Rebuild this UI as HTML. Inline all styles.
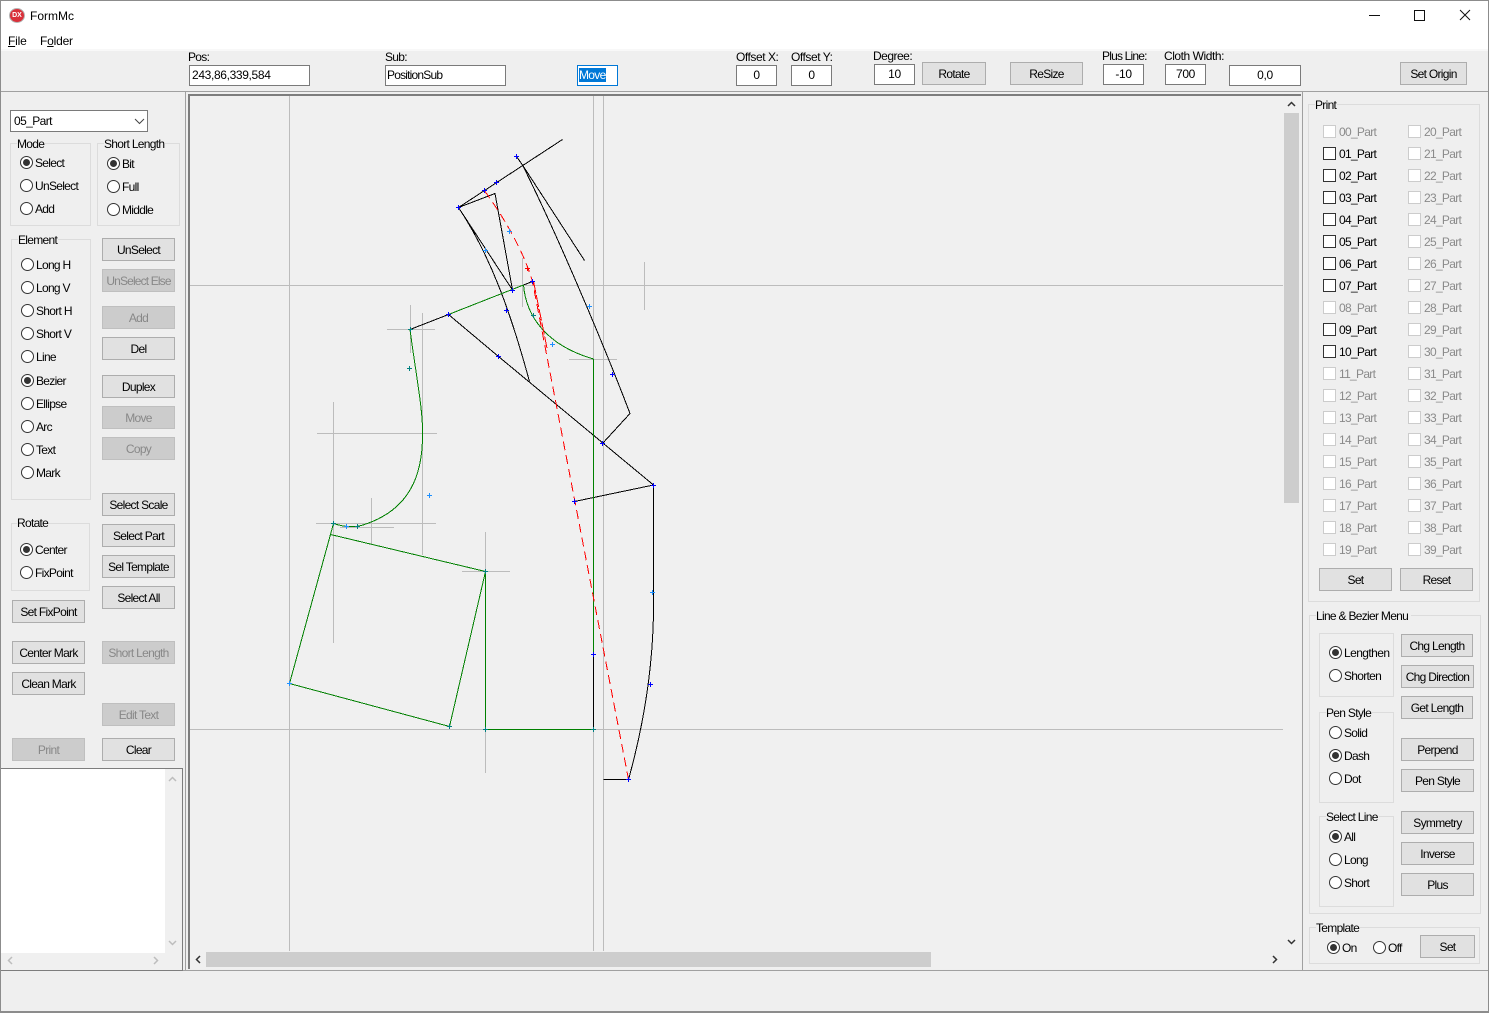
<!DOCTYPE html>
<html><head><meta charset="utf-8"><title>FormMc</title>
<style>
html,body{margin:0;padding:0;width:1489px;height:1013px;overflow:hidden;background:#efefef}
body{position:relative;font:12px/16px "Liberation Sans",sans-serif;letter-spacing:-.7px;color:#000}
div,span.a{position:absolute;box-sizing:border-box}
.t{white-space:nowrap;height:16px}
.d{color:#8a8a8a}
.b{height:23px;width:73px;background:#e1e1e1;border:1px solid #adadad;text-align:center;line-height:23px;white-space:nowrap}
.x{background:#ccc;border-color:#bfbfbf;color:#888}
.i{height:21px;background:#fff;border:1px solid #7a7a7a;line-height:19px;white-space:nowrap;text-align:center;letter-spacing:-.35px}
.g{border:1px solid #dcdcdc}
.r{width:13px;height:13px;border:1px solid #333;border-radius:50%;background:#fff}
.on:after{content:"";position:absolute;left:2px;top:2px;width:7px;height:7px;border-radius:50%;background:#333}
.c{width:13px;height:13px;border:1px solid #333;background:#fff}
.c.o{border-color:#ccc}
.l{background:#8c8c8c}
svg{position:absolute;left:0;top:0;overflow:visible}
</style></head><body>
<div style="left:0;top:0;width:1489px;height:50px;background:#fff"></div>
<div style="left:0;top:49px;width:1489px;height:2px;background:#f8f8f8"></div>
<div class="l" style="left:0;top:0;width:1489px;height:1px"></div>
<div class="l" style="left:0;top:0;width:1px;height:1013px"></div>
<div class="l" style="left:1488px;top:0;width:1px;height:1013px"></div>
<div class="l" style="left:0;top:1011px;width:1489px;height:2px"></div>
<div style="left:9px;top:8px;width:16px;height:15px;border-radius:50%;background:#d9303a;border:1px solid #b5b5b5;color:#fff;font:bold 7px/13px 'Liberation Sans',sans-serif;text-align:center;letter-spacing:0">DX</div>
<div class="t" style="left:30px;top:8px;letter-spacing:0">FormMc</div>
<div class="t" style="left:8px;top:33px;letter-spacing:-.2px"><u>F</u>ile</div>
<div class="t" style="left:40px;top:33px;letter-spacing:-.2px">F<u>o</u>lder</div>
<svg width="1489" height="30" style="left:0;top:0"><path d="M1369 15.500h11M1414.500 10.500h10v10h-10zM1460 10l10 10M1470 10l-10 10" stroke="#111" fill="none"/></svg>

<div class="t" style="left:188px;top:49px">Pos:</div>
<div class="i" style="left:189px;top:65px;width:121px;text-align:left;padding-left:2px">243,86,339,584</div>
<div class="t" style="left:385px;top:49px">Sub:</div>
<div class="i" style="left:385px;top:65px;width:121px;text-align:left;padding-left:1px;letter-spacing:-.8px">PositionSub</div>
<div class="i" style="left:577px;top:65px;width:41px;text-align:left;padding-left:1px;border-color:#0078d7;letter-spacing:-.7px"><span style="background:#0078d7;color:#fff">Move</span></div>
<div class="t" style="left:736px;top:49px;letter-spacing:-.45px">Offset X:</div>
<div class="i" style="left:736px;top:65px;width:41px">0</div>
<div class="t" style="left:791px;top:49px;letter-spacing:-.45px">Offset Y:</div>
<div class="i" style="left:791px;top:65px;width:41px">0</div>
<div class="t" style="left:873px;top:48px;letter-spacing:-.5px">Degree:</div>
<div class="i" style="left:874px;top:64px;width:41px">10</div>
<div class="b" style="left:922px;top:62px;width:64px">Rotate</div>
<div class="b" style="left:1010px;top:62px">ReSize</div>
<div class="t" style="left:1102px;top:48px;letter-spacing:-.8px">Plus Line:</div>
<div class="i" style="left:1103px;top:64px;width:41px">-10</div>
<div class="t" style="left:1164px;top:48px;letter-spacing:-.45px">Cloth Width:</div>
<div class="i" style="left:1165px;top:64px;width:41px">700</div>
<div class="i" style="left:1229px;top:65px;width:72px">0,0</div>
<div class="b" style="left:1400px;top:62px;width:67px">Set Origin</div>

<div class="l" style="left:1px;top:91px;width:1487px;height:1px;background:#a0a0a0"></div>
<div class="l" style="left:185px;top:91px;width:1px;height:880px;background:#a0a0a0"></div>
<div class="l" style="left:1302px;top:91px;width:1px;height:880px;background:#a0a0a0"></div>
<div class="l" style="left:1px;top:970px;width:1487px;height:1px;background:#a0a0a0"></div>

<!-- canvas -->
<div style="left:188px;top:94px;width:1113px;height:875px;background:#f0f0f0;border-left:2px solid #7d7d7d;border-top:2px solid #7d7d7d"></div>
<svg width="1489" height="1013">
<g shape-rendering="crispEdges" stroke="#bcbcbc" fill="none">
<path d="M289.500 96V951M593.500 96V951M603.500 96V951M190 285.500H1283M190 729.500H1283"/>
<path d="M387 329.500H435M410.500 305V353M422.500 313V555M522.500 258V307M644.500 262V310M569 359.500H617M317 433.500H437M333.500 402V643M316 523.500H436M340 527.500H394M371.500 498V545M462 571.500H510M485.500 532V773"/>
</g>
<g fill="none" stroke="#000" shape-rendering="crispEdges">
<path d="M458.500 207.500L562.500 139.500M516.500 156.500L522.500 165L584.500 260.500"/>
<path d="M522.500 165C555 230 600 335 630 413.500L602.500 443.500"/>
<path d="M458.500 207.500L495 193.500L512.500 290L458.500 207.500"/>
<path d="M458.500 207.500C490 255 510 310 529.500 381.500"/>
<path d="M523.500 285L532.500 281.500M410 329.500L448.500 314.500"/>
<path d="M448.500 314.500L498.500 356.500L653.500 485M574.500 501.500L653.500 485"/>
<path d="M653.500 485V600C654 660 645 720 628.500 779.500H603.500M593.500 653V729.500"/>
</g>
<g fill="none" stroke="#008000" shape-rendering="crispEdges">
<path d="M448.500 314.500L523.500 285"/>
<path d="M593.500 359V653M485.500 571.500V729.500H593.500"/>
<path d="M523.500 285C526 315 545 345 593.500 359"/>
<path d="M410 329.500C416 375 423 410 422.500 433C423 475 410 510 363 525Q350 529 333.500 523.500"/>
<path d="M333.500 523.500L289.500 683.500L449.500 726.500L485.500 571.500L330.500 534.500"/>
</g>
<path d="M484.500 190.700Q520 240 532.500 281.500L628.500 779.500" fill="none" stroke="#f00" stroke-dasharray="9 5" shape-rendering="crispEdges"/>
<path d="M533.500 281.500L547 348" fill="none" stroke="#f00" stroke-dasharray="12 2" shape-rendering="crispEdges"/>
<path shape-rendering="crispEdges" fill="none" stroke="#00f" d="M514 156.500h5M516.500 154v5M494 182.500h5M496.500 180v5M482 190.500h5M484.500 188v5M456 207.500h5M458.500 205v5M510 290.500h5M512.500 288v5M530 281.500h5M532.500 279v5M504 310.500h5M506.500 308v5M446 314.500h5M448.500 312v5M496 356.500h5M498.500 354v5M610 374.500h5M612.500 372v5M600 443.500h5M602.500 441v5M651 485.500h5M653.500 483v5M572 501.500h5M574.500 499v5M591 654.500h5M593.500 652v5M648 684.500h5M650.500 682v5M626 779.500h5M628.500 777v5"/>
<path shape-rendering="crispEdges" fill="none" stroke="#1e90ff" d="M507 231.500h5M509.500 229v5M483 250.500h5M485.500 248v5M587 306.500h5M589.500 304v5M550 344.500h5M552.500 342v5M427 495.500h5M429.500 493v5M344 526.500h5M346.500 524v5M287 683.500h5M289.500 681v5M650 592.500h5M652.500 590v5"/>
<path shape-rendering="crispEdges" fill="none" stroke="#008080" d="M408 329.500h5M410.500 327v5M407 368.500h5M409.500 366v5M531 315.500h5M533.500 313v5M331 523.500h5M333.500 521v5M355 526.500h5M357.500 524v5M447 726.500h5M449.500 724v5M483 571.500h5M485.500 569v5M483 729.500h5M485.500 727v5M591 729.500h5M593.500 727v5"/>
<path shape-rendering="crispEdges" fill="none" stroke="#f00" d="M525 268.500h5M527.500 266v5"/>
</svg>
<!-- canvas scrollbars -->
<div style="left:1284px;top:96px;width:16px;height:855px;background:#f0f0f0"></div>
<div style="left:1284px;top:113px;width:15px;height:390px;background:#cdcdcd"></div>
<div style="left:190px;top:951px;width:1110px;height:17px;background:#f0f0f0"></div>
<div style="left:206px;top:952px;width:725px;height:15px;background:#cdcdcd"></div>
<svg width="1489" height="1013"><path d="M1288 106l3.500-3.500l3.500 3.500M1288 940l3.500 3.500l3.500-3.500M200 956l-3.500 3.500l3.500 3.500M1273 956l3.500 3.500l-3.500 3.500" fill="none" stroke="#333" stroke-width="1.500"/></svg>

<!-- left panel -->
<div class="i" style="left:10px;top:110px;width:138px;height:22px;text-align:left;padding-left:3px;line-height:20px;letter-spacing:-.6px">05_Part</div>
<svg width="200" height="140"><path d="M135 119l4.500 4.500l4.500-4.500" fill="none" stroke="#444"/></svg>
<div class="g" style="left:10px;top:143px;width:81px;height:83px"></div>
<div class="t" style="left:17px;top:136px;background:#efefef;padding-right:1px">Mode</div>
<div class="r on" style="left:20px;top:156px"></div><div class="t" style="left:35px;top:155px">Select</div>
<div class="r" style="left:20px;top:179px"></div><div class="t" style="left:35px;top:178px">UnSelect</div>
<div class="r" style="left:20px;top:202px"></div><div class="t" style="left:35px;top:201px">Add</div>
<div class="g" style="left:97px;top:143px;width:83px;height:83px"></div>
<div class="t" style="left:104px;top:136px;background:#efefef;padding-right:1px">Short Length</div>
<div class="r on" style="left:107px;top:157px"></div><div class="t" style="left:122px;top:156px">Bit</div>
<div class="r" style="left:107px;top:180px"></div><div class="t" style="left:122px;top:179px">Full</div>
<div class="r" style="left:107px;top:203px"></div><div class="t" style="left:122px;top:202px">Middle</div>

<div class="g" style="left:11px;top:239px;width:80px;height:261px"></div>
<div class="t" style="left:18px;top:232px;background:#efefef;padding-right:1px">Element</div>
<div class="r" style="left:21px;top:258px"></div><div class="t" style="left:36px;top:257px">Long H</div>
<div class="r" style="left:21px;top:281px"></div><div class="t" style="left:36px;top:280px">Long V</div>
<div class="r" style="left:21px;top:304px"></div><div class="t" style="left:36px;top:303px">Short H</div>
<div class="r" style="left:21px;top:327px"></div><div class="t" style="left:36px;top:326px">Short V</div>
<div class="r" style="left:21px;top:350px"></div><div class="t" style="left:36px;top:349px">Line</div>
<div class="r on" style="left:21px;top:374px"></div><div class="t" style="left:36px;top:373px">Bezier</div>
<div class="r" style="left:21px;top:397px"></div><div class="t" style="left:36px;top:396px">Ellipse</div>
<div class="r" style="left:21px;top:420px"></div><div class="t" style="left:36px;top:419px">Arc</div>
<div class="r" style="left:21px;top:443px"></div><div class="t" style="left:36px;top:442px">Text</div>
<div class="r" style="left:21px;top:466px"></div><div class="t" style="left:36px;top:465px">Mark</div>

<div class="g" style="left:11px;top:523px;width:79px;height:68px"></div>
<div class="t" style="left:17px;top:515px;background:#efefef;padding-right:1px">Rotate</div>
<div class="r on" style="left:20px;top:543px"></div><div class="t" style="left:35px;top:542px">Center</div>
<div class="r" style="left:20px;top:566px"></div><div class="t" style="left:35px;top:565px">FixPoint</div>

<div class="b" style="left:102px;top:238px">UnSelect</div>
<div class="b x" style="left:102px;top:269px;letter-spacing:-.85px">UnSelect Else</div>
<div class="b x" style="left:102px;top:306px">Add</div>
<div class="b" style="left:102px;top:337px">Del</div>
<div class="b" style="left:102px;top:375px">Duplex</div>
<div class="b x" style="left:102px;top:406px">Move</div>
<div class="b x" style="left:102px;top:437px">Copy</div>
<div class="b" style="left:102px;top:493px">Select Scale</div>
<div class="b" style="left:102px;top:524px">Select Part</div>
<div class="b" style="left:102px;top:555px">Sel Template</div>
<div class="b" style="left:102px;top:586px">Select All</div>
<div class="b x" style="left:102px;top:641px">Short Length</div>
<div class="b x" style="left:102px;top:703px">Edit Text</div>
<div class="b" style="left:102px;top:738px">Clear</div>
<div class="b" style="left:12px;top:600px">Set FixPoint</div>
<div class="b" style="left:12px;top:641px">Center Mark</div>
<div class="b" style="left:12px;top:672px">Clean Mark</div>
<div class="b x" style="left:12px;top:738px">Print</div>

<!-- memo -->
<div style="left:1px;top:768px;width:182px;height:203px;background:#f0f0f0;border-top:1px solid #7d7d7d;border-right:1px solid #7d7d7d;border-bottom:1px solid #7d7d7d"></div>
<div style="left:1px;top:769px;width:164px;height:184px;background:#fff"></div>
<svg width="200" height="1013"><path d="M169 781l3.500-3.500l3.500 3.500M169 941l3.500 3.500l3.500-3.500M12 957l-3.500 3.500l3.500 3.500M154 957l3.500 3.500l-3.500 3.500" fill="none" stroke="#bdbdbd" stroke-width="1.500"/></svg>

<!-- print group -->
<div class="g" style="left:1308px;top:104px;width:172px;height:498px"></div>
<div class="t" style="left:1315px;top:97px;background:#efefef;padding-right:1px">Print</div>
<div class="c o" style="left:1323px;top:125px"></div><div class="t d" style="left:1339px;top:124px">00_Part</div>
<div class="c" style="left:1323px;top:147px"></div><div class="t" style="left:1339px;top:146px">01_Part</div>
<div class="c" style="left:1323px;top:169px"></div><div class="t" style="left:1339px;top:168px">02_Part</div>
<div class="c" style="left:1323px;top:191px"></div><div class="t" style="left:1339px;top:190px">03_Part</div>
<div class="c" style="left:1323px;top:213px"></div><div class="t" style="left:1339px;top:212px">04_Part</div>
<div class="c" style="left:1323px;top:235px"></div><div class="t" style="left:1339px;top:234px">05_Part</div>
<div class="c" style="left:1323px;top:257px"></div><div class="t" style="left:1339px;top:256px">06_Part</div>
<div class="c" style="left:1323px;top:279px"></div><div class="t" style="left:1339px;top:278px">07_Part</div>
<div class="c o" style="left:1323px;top:301px"></div><div class="t d" style="left:1339px;top:300px">08_Part</div>
<div class="c" style="left:1323px;top:323px"></div><div class="t" style="left:1339px;top:322px">09_Part</div>
<div class="c" style="left:1323px;top:345px"></div><div class="t" style="left:1339px;top:344px">10_Part</div>
<div class="c o" style="left:1323px;top:367px"></div><div class="t d" style="left:1339px;top:366px">11_Part</div>
<div class="c o" style="left:1323px;top:389px"></div><div class="t d" style="left:1339px;top:388px">12_Part</div>
<div class="c o" style="left:1323px;top:411px"></div><div class="t d" style="left:1339px;top:410px">13_Part</div>
<div class="c o" style="left:1323px;top:433px"></div><div class="t d" style="left:1339px;top:432px">14_Part</div>
<div class="c o" style="left:1323px;top:455px"></div><div class="t d" style="left:1339px;top:454px">15_Part</div>
<div class="c o" style="left:1323px;top:477px"></div><div class="t d" style="left:1339px;top:476px">16_Part</div>
<div class="c o" style="left:1323px;top:499px"></div><div class="t d" style="left:1339px;top:498px">17_Part</div>
<div class="c o" style="left:1323px;top:521px"></div><div class="t d" style="left:1339px;top:520px">18_Part</div>
<div class="c o" style="left:1323px;top:543px"></div><div class="t d" style="left:1339px;top:542px">19_Part</div>
<div class="c o" style="left:1408px;top:125px"></div><div class="t d" style="left:1424px;top:124px">20_Part</div>
<div class="c o" style="left:1408px;top:147px"></div><div class="t d" style="left:1424px;top:146px">21_Part</div>
<div class="c o" style="left:1408px;top:169px"></div><div class="t d" style="left:1424px;top:168px">22_Part</div>
<div class="c o" style="left:1408px;top:191px"></div><div class="t d" style="left:1424px;top:190px">23_Part</div>
<div class="c o" style="left:1408px;top:213px"></div><div class="t d" style="left:1424px;top:212px">24_Part</div>
<div class="c o" style="left:1408px;top:235px"></div><div class="t d" style="left:1424px;top:234px">25_Part</div>
<div class="c o" style="left:1408px;top:257px"></div><div class="t d" style="left:1424px;top:256px">26_Part</div>
<div class="c o" style="left:1408px;top:279px"></div><div class="t d" style="left:1424px;top:278px">27_Part</div>
<div class="c o" style="left:1408px;top:301px"></div><div class="t d" style="left:1424px;top:300px">28_Part</div>
<div class="c o" style="left:1408px;top:323px"></div><div class="t d" style="left:1424px;top:322px">29_Part</div>
<div class="c o" style="left:1408px;top:345px"></div><div class="t d" style="left:1424px;top:344px">30_Part</div>
<div class="c o" style="left:1408px;top:367px"></div><div class="t d" style="left:1424px;top:366px">31_Part</div>
<div class="c o" style="left:1408px;top:389px"></div><div class="t d" style="left:1424px;top:388px">32_Part</div>
<div class="c o" style="left:1408px;top:411px"></div><div class="t d" style="left:1424px;top:410px">33_Part</div>
<div class="c o" style="left:1408px;top:433px"></div><div class="t d" style="left:1424px;top:432px">34_Part</div>
<div class="c o" style="left:1408px;top:455px"></div><div class="t d" style="left:1424px;top:454px">35_Part</div>
<div class="c o" style="left:1408px;top:477px"></div><div class="t d" style="left:1424px;top:476px">36_Part</div>
<div class="c o" style="left:1408px;top:499px"></div><div class="t d" style="left:1424px;top:498px">37_Part</div>
<div class="c o" style="left:1408px;top:521px"></div><div class="t d" style="left:1424px;top:520px">38_Part</div>
<div class="c o" style="left:1408px;top:543px"></div><div class="t d" style="left:1424px;top:542px">39_Part</div>
<div class="b" style="left:1319px;top:568px">Set</div>
<div class="b" style="left:1400px;top:568px">Reset</div>

<!-- line & bezier -->
<div class="g" style="left:1309px;top:615px;width:172px;height:299px"></div>
<div class="t" style="left:1316px;top:608px;background:#efefef;padding-right:3px">Line &amp; Bezier Menu</div>
<div class="g" style="left:1319px;top:633px;width:75px;height:64px"></div>
<div class="r on" style="left:1329px;top:646px"></div><div class="t" style="left:1344px;top:645px;letter-spacing:-.57px">Lengthen</div>
<div class="r" style="left:1329px;top:669px"></div><div class="t" style="left:1344px;top:668px">Shorten</div>
<div class="g" style="left:1319px;top:712px;width:75px;height:91px"></div>
<div class="t" style="left:1326px;top:705px;background:#efefef;padding-right:1px">Pen Style</div>
<div class="r" style="left:1329px;top:726px"></div><div class="t" style="left:1344px;top:725px">Solid</div>
<div class="r on" style="left:1329px;top:749px"></div><div class="t" style="left:1344px;top:748px">Dash</div>
<div class="r" style="left:1329px;top:772px"></div><div class="t" style="left:1344px;top:771px">Dot</div>
<div class="g" style="left:1319px;top:816px;width:75px;height:91px"></div>
<div class="t" style="left:1326px;top:809px;background:#efefef;padding-right:1px">Select Line</div>
<div class="r on" style="left:1329px;top:830px"></div><div class="t" style="left:1344px;top:829px">All</div>
<div class="r" style="left:1329px;top:853px"></div><div class="t" style="left:1344px;top:852px">Long</div>
<div class="r" style="left:1329px;top:876px"></div><div class="t" style="left:1344px;top:875px">Short</div>
<div class="b" style="left:1401px;top:634px;width:72px">Chg Length</div>
<div class="b" style="left:1401px;top:665px">Chg Direction</div>
<div class="b" style="left:1401px;top:696px;width:72px">Get Length</div>
<div class="b" style="left:1401px;top:738px">Perpend</div>
<div class="b" style="left:1401px;top:769px">Pen Style</div>
<div class="b" style="left:1401px;top:811px">Symmetry</div>
<div class="b" style="left:1401px;top:842px">Inverse</div>
<div class="b" style="left:1401px;top:873px">Plus</div>

<!-- template -->
<div class="g" style="left:1309px;top:927px;width:171px;height:37px"></div>
<div class="t" style="left:1316px;top:920px;background:#efefef;padding-right:1px">Template</div>
<div class="r on" style="left:1327px;top:941px"></div><div class="t" style="left:1342px;top:940px">On</div>
<div class="r" style="left:1373px;top:941px"></div><div class="t" style="left:1388px;top:940px">Off</div>
<div class="b" style="left:1420px;top:935px;width:55px">Set</div>
</body></html>
